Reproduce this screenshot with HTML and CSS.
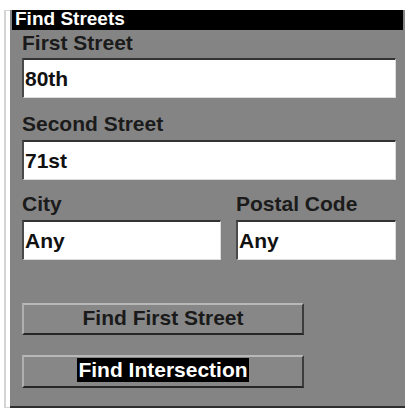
FILE: index.html
```html
<!DOCTYPE html>
<html>
<head>
<meta charset="utf-8">
<link rel="stylesheet" href="styles.css">
</head>
<body>
<div class="screen">
  <div class="titlebar">Find Streets</div>
  <div class="content">
    <div class="label first">First Street</div>
    <div class="field">80th</div>
    <div class="label">Second Street</div>
    <div class="field">71st</div>
    <div class="pair">
      <div class="col">
        <div class="label">City</div>
        <div class="field">Any</div>
      </div>
      <div class="col">
        <div class="label">Postal Code</div>
        <div class="field">Any</div>
      </div>
    </div>
    <div class="btn btn-first">Find First Street</div>
    <div class="btn btn-second"><span class="sel">Find Intersection</span></div>
  </div>
</div>
</body>
</html>
```
FILE: styles.css
```css
html, body {
  margin: 0;
  padding: 0;
  background: #ffffff;
}
body {
  width: 409px;
  height: 412px;
  overflow: hidden;
  font-family: "Liberation Sans", Arial, sans-serif;
  font-weight: bold;
}
.screen {
  margin: 10px 0 0 10px;
  width: 395px;
  height: 396px;
  background: #848484;
  border-bottom: 2px solid #2e2e2e;
  box-shadow: -5px 0 0 -1px #ffffff, -6px 0 0 0 #d4d4d4;
}
.titlebar {
  margin: 2px 2px 0 2px;
  height: 18px;
  padding: 0 0 2px 3px;
  background: #000000;
  color: #ffffff;
  font-size: 19px;
  line-height: 18px;
}
.content {
  padding: 0 9px 0 12px;
}
.label {
  color: #1b1b1b;
  font-size: 21px;
  line-height: 24px;
  height: 24px;
  margin-top: 12px;
  margin-bottom: 4px;
  white-space: nowrap;
}
.label.first {
  margin-top: 1px;
  margin-bottom: 3px;
}
.content > .label:nth-child(3) {
  margin-top: 14px;
}
.field {
  box-sizing: border-box;
  height: 40px;
  background: #ffffff;
  border-top: 2px solid #333333;
  border-left: 2px solid #4a4a4a;
  border-right: 1px solid #dcdcdc;
  border-bottom: 1px solid #dcdcdc;
  padding: 0 0 0 1px;
  color: #111111;
  font-size: 21px;
  line-height: 38px;
}
.pair {
  display: grid;
  grid-template-columns: 199px 1fr;
  column-gap: 15px;
}
.btn {
  box-sizing: border-box;
  width: 282px;
  background: #878787;
  border-top: 2px solid #b8b8b8;
  border-left: 2px solid #b0b0b0;
  border-right: 2px solid #3c3c3c;
  border-bottom: 2px solid #262626;
  text-align: center;
  color: #1a1a1a;
  font-size: 21px;
}
.btn-first {
  margin-top: 43px;
  height: 32px;
  line-height: 26px;
}
.btn-second {
  margin-top: 20px;
  height: 33px;
  line-height: 27px;
}
.sel {
  display: inline-block;
  background: #000000;
  color: #ffffff;
  line-height: 24px;
  padding: 0 1px;
  vertical-align: top;
  margin-top: 1px;
}
```
